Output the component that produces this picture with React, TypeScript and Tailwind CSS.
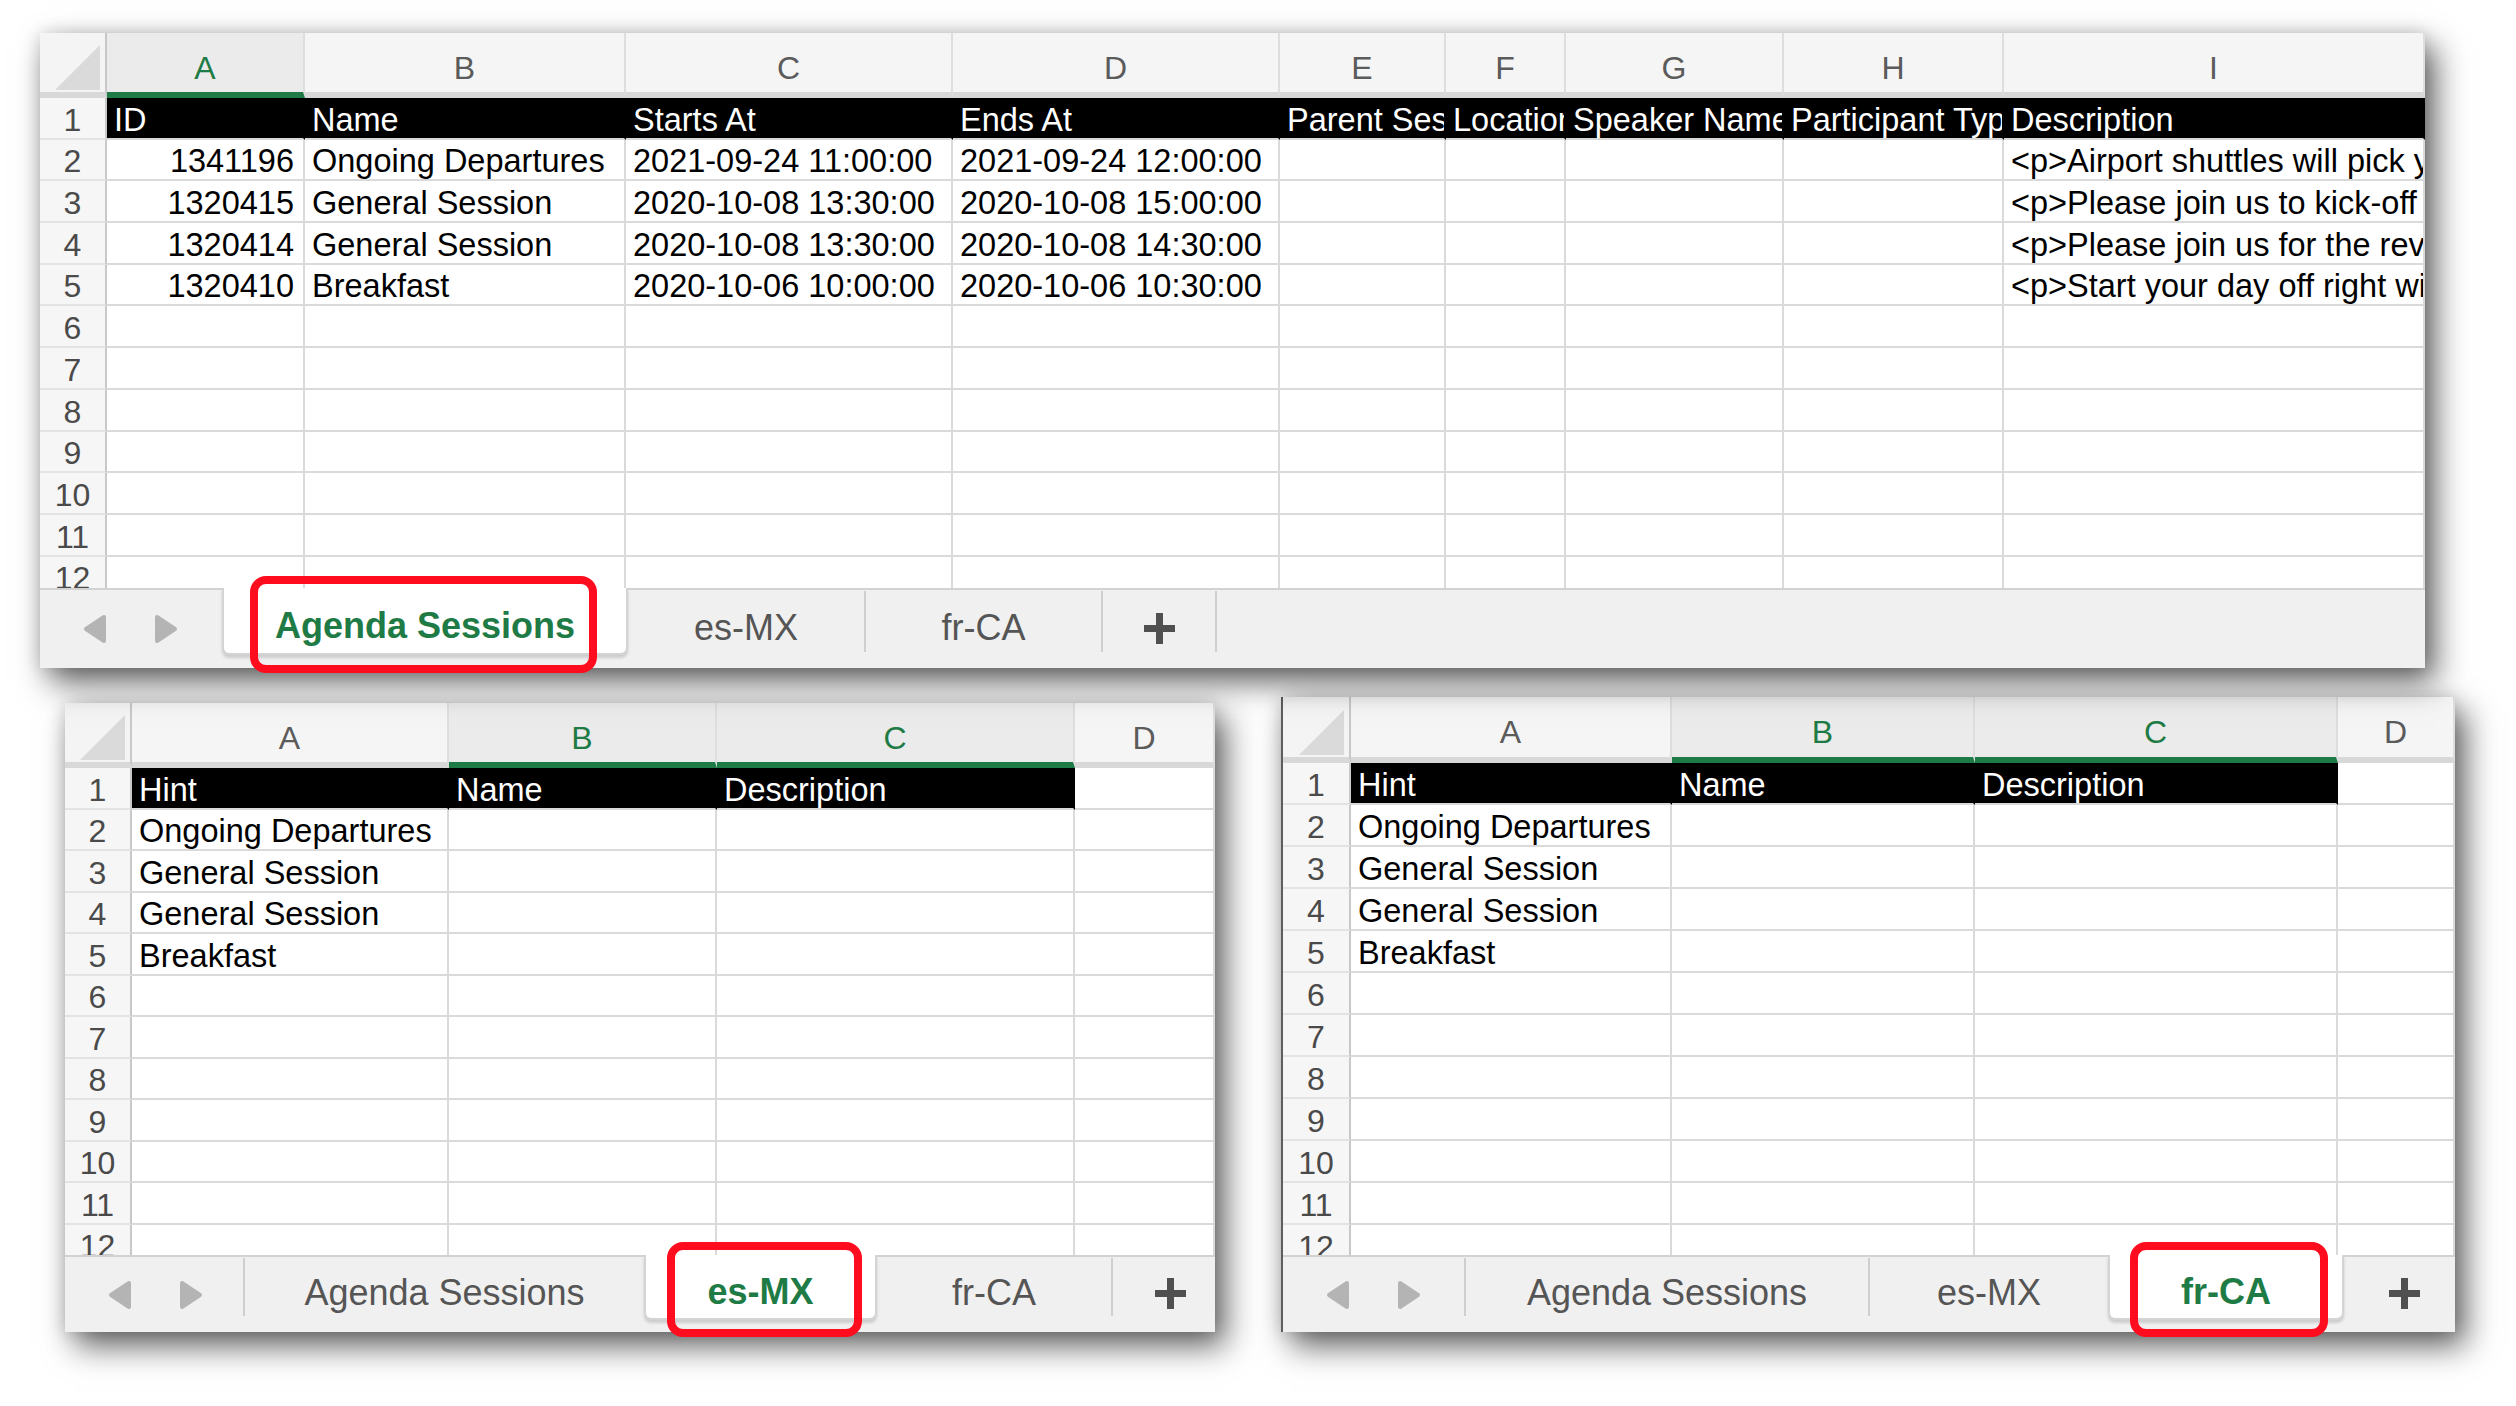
import React from "react";

type Col = { l: string; sel?: boolean };

function Corner() {
  return (
    <div className="relative bg-[#f4f4f4] border-r-2 border-b-[6px] border-r-[#c8c8c8] border-b-[#d8d8d8]">
      <svg className="absolute right-[5px] bottom-[2px]" width="45" height="45" viewBox="0 0 45 45">
        <polygon points="45,0 45,45 0,45" fill="#dadada" />
      </svg>
    </div>
  );
}

function ColHeader({ c }: { c: Col }) {
  return (
    <div
      className={`flex items-center justify-center pt-[10px] border-r-2 border-b-[6px] border-r-[#dedede] text-[32px] leading-[36px] ${
        c.sel ? "bg-[#ebebeb] border-b-[#1e7b45] text-[#1e7b45]" : "bg-[#f5f5f5] border-b-[#d8d8d8] text-[#5b5b5b]"
      }`}
    >
      {c.l}
    </div>
  );
}

type GridProps = {
  gridCols: string;
  headerH: string;
  rowH: string;
  areaH: string;
  cols: Col[];
  head: string[];
  blackN: number;
  data: string[][];
  rightCols: number[];
};

function Grid({ gridCols, headerH, rowH, areaH, cols, head, blackN, data, rightCols }: GridProps) {
  const rows = Array.from({ length: 12 }, (_, i) => i + 1);
  return (
    <div className={`${areaH} overflow-hidden bg-white shrink-0`}>
      <div className={`grid ${gridCols} ${headerH}`}>
        <Corner />
        {cols.map((c) => (
          <ColHeader key={c.l} c={c} />
        ))}
      </div>
      {rows.map((r) => (
        <div key={r} className={`grid ${gridCols} ${rowH}`}>
          <div className="flex items-end justify-center bg-[#f6f6f6] border-r-2 border-b-2 border-r-[#c8c8c8] border-b-[#e3e3e3] text-[32px] leading-[36px] text-[#4a4a4a]">
            {r}
          </div>
          {cols.map((c, ci) => {
            if (r === 1) {
              const black = ci < blackN;
              return (
                <div
                  key={c.l}
                  className={`flex items-end overflow-hidden whitespace-nowrap pl-[7px] border-b-2 border-b-[#d9d9d9] border-r-2 text-[32.5px] leading-[36px] ${
                    black ? "bg-black text-white border-r-black" : "bg-white border-r-[#dadada]"
                  }`}
                >
                  {head[ci] ?? ""}
                </div>
              );
            }
            const v = data[r - 2]?.[ci] ?? "";
            const right = rightCols.includes(ci);
            return (
              <div
                key={c.l}
                className={`flex items-end overflow-hidden whitespace-nowrap bg-white border-b-2 border-r-2 border-[#dadada] text-[32.5px] leading-[36px] text-black ${
                  right ? "justify-end pr-[9px]" : "pl-[7px]"
                }`}
              >
                {v}
              </div>
            );
          })}
        </div>
      ))}
    </div>
  );
}

function Arrows({ w, h }: { w: string; h: string }) {
  return (
    <div className={`${w} ${h} flex items-center shrink-0`}>
      <svg className="ml-[43px]" width="24" height="30" viewBox="0 0 24 30">
        <path d="M21 3 L3 15 L21 27 Z" fill="#b4b4b4" stroke="#b4b4b4" strokeWidth="4" strokeLinejoin="round" />
      </svg>
      <svg className="ml-[47px]" width="24" height="30" viewBox="0 0 24 30">
        <path d="M3 3 L21 15 L3 27 Z" fill="#b4b4b4" stroke="#b4b4b4" strokeWidth="4" strokeLinejoin="round" />
      </svg>
    </div>
  );
}

function Tab({ w, h, children }: { w: string; h: string; children: React.ReactNode }) {
  return (
    <div className={`${w} ${h} shrink-0 flex items-center justify-center whitespace-nowrap text-[36px] leading-[40px] text-[#555555]`}>
      {children}
    </div>
  );
}

function Sep({ h }: { h: string }) {
  return <div className={`self-start mt-[1px] w-[2px] ${h} bg-[#cfcfcf] shrink-0`} />;
}

function Plus() {
  return (
    <svg width="31" height="31" viewBox="0 0 31 31">
      <rect x="0" y="12" width="31" height="7" fill="#505050" />
      <rect x="12" y="0" width="7" height="31" fill="#505050" />
    </svg>
  );
}

const SHADOW = "shadow-[10px_14px_30px_rgba(0,0,0,0.62),0_0_16px_rgba(0,0,0,0.14)]";

export default function App() {
  const topCols: Col[] = [
    { l: "A", sel: true },
    { l: "B" },
    { l: "C" },
    { l: "D" },
    { l: "E" },
    { l: "F" },
    { l: "G" },
    { l: "H" },
    { l: "I" },
  ];
  const topHead = [
    "ID",
    "Name",
    "Starts At",
    "Ends At",
    "Parent Session",
    "Location",
    "Speaker Names",
    "Participant Types",
    "Description",
  ];
  const topData = [
    ["1341196", "Ongoing Departures", "2021-09-24 11:00:00", "2021-09-24 12:00:00", "", "", "", "", "<p>Airport shuttles will pick you up at the hotel</p>"],
    ["1320415", "General Session", "2020-10-08 13:30:00", "2020-10-08 15:00:00", "", "", "", "", "<p>Please join us to kick-off the event</p>"],
    ["1320414", "General Session", "2020-10-08 13:30:00", "2020-10-08 14:30:00", "", "", "", "", "<p>Please join us for the review</p>"],
    ["1320410", "Breakfast", "2020-10-06 10:00:00", "2020-10-06 10:30:00", "", "", "", "", "<p>Start your day off right with breakfast</p>"],
  ];
  const subCols: Col[] = [{ l: "A" }, { l: "B", sel: true }, { l: "C", sel: true }, { l: "D" }];
  const subHead = ["Hint", "Name", "Description", ""];
  const subData = [["Ongoing Departures"], ["General Session"], ["General Session"], ["Breakfast"]];

  return (
    <div className="w-[2516px] h-[1406px] bg-white overflow-hidden pt-[33px] font-['Liberation_Sans',Arial,sans-serif]">
      {/* Top sheet */}
      <div className={`relative z-10 ml-[40px] w-[2385px] h-[635px] flex flex-col bg-white ${SHADOW}`}>
        <Grid
          gridCols="grid-cols-[67px_198px_321px_327px_327px_166px_120px_218px_220px_421px]"
          headerH="h-[65px]"
          rowH="h-[41.7px]"
          areaH="h-[555px]"
          cols={topCols}
          head={topHead}
          blackN={9}
          data={topData}
          rightCols={[0]}
        />
        <div className="relative flex items-start h-[80px] shrink-0 bg-[#f0f0f0] border-t-2 border-[#d2d2d2]">
          <Arrows w="w-[182px]" h="h-[78px]" />
          <div className="relative -mt-[2px] w-[406px] h-[67px] shrink-0 bg-white rounded-b-[7px] border-x-2 border-b-2 border-[#d4d4d4] shadow-[0_3px_3px_rgba(0,0,0,0.15)] flex items-center justify-center pt-[11px] text-[36px] leading-[40px] font-bold text-[#1e7b45] whitespace-nowrap">
            Agenda Sessions
            <div className="absolute left-[26px] -top-[12px] w-[347px] h-[97px] border-[8px] border-[#ff0c1e] rounded-[16px]" />
          </div>
          <Tab w="w-[236px]" h="h-[76px]">es-MX</Tab>
          <Sep h="h-[61px]" />
          <Tab w="w-[235px]" h="h-[76px]">fr-CA</Tab>
          <Sep h="h-[61px]" />
          <div className="w-[112px] h-[76px] shrink-0 flex items-center justify-center">
            <Plus />
          </div>
          <Sep h="h-[61px]" />
        </div>
      </div>

      <div className="flex items-start">
        {/* es-MX sheet */}
        <div className={`ml-[65px] mt-[35px] w-[1150px] h-[629px] flex flex-col bg-white ${SHADOW}`}>
          <Grid
            gridCols="grid-cols-[67px_317px_268px_358px_140px]"
            headerH="h-[65px]"
            rowH="h-[41.5px]"
            areaH="h-[552px]"
            cols={subCols}
            head={subHead}
            blackN={3}
            data={subData}
            rightCols={[]}
          />
          <div className="relative flex items-start h-[77px] shrink-0 bg-[#f0f0f0] border-t-2 border-[#d2d2d2]">
            <Arrows w="w-[178px]" h="h-[75px]" />
            <Sep h="h-[58px]" />
            <Tab w="w-[399px]" h="h-[72px]">Agenda Sessions</Tab>
            <div className="relative -mt-[2px] w-[233px] h-[65px] shrink-0 bg-white rounded-b-[7px] border-x-2 border-b-2 border-[#d4d4d4] shadow-[0_3px_3px_rgba(0,0,0,0.15)] flex items-center justify-center pt-[11px] text-[36px] leading-[40px] font-bold text-[#1e7b45] whitespace-nowrap">
              es-MX
              <div className="absolute left-[21px] -top-[13px] w-[195px] h-[95px] border-[8px] border-[#ff0c1e] rounded-[16px]" />
            </div>
            <Tab w="w-[234px]" h="h-[72px]">fr-CA</Tab>
            <Sep h="h-[58px]" />
            <div className="w-[102px] h-[72px] shrink-0 flex items-center pl-[42px]">
              <Plus />
            </div>
          </div>
        </div>

        {/* fr-CA sheet */}
        <div className={`ml-[66px] mt-[29px] w-[1174px] h-[635px] flex flex-col bg-white border-l-2 border-[#5e5e5e] ${SHADOW}`}>
          <Grid
            gridCols="grid-cols-[68px_321px_303px_363px_117px]"
            headerH="h-[66px]"
            rowH="h-[42px]"
            areaH="h-[558px]"
            cols={subCols}
            head={subHead}
            blackN={3}
            data={subData}
            rightCols={[]}
          />
          <div className="relative flex items-start h-[77px] shrink-0 bg-[#f0f0f0] border-t-2 border-[#d2d2d2]">
            <Arrows w="w-[181px]" h="h-[75px]" />
            <Sep h="h-[58px]" />
            <Tab w="w-[402px]" h="h-[72px]">Agenda Sessions</Tab>
            <Sep h="h-[58px]" />
            <Tab w="w-[238px]" h="h-[72px]">es-MX</Tab>
            <div className="relative -mt-[2px] w-[236px] h-[65px] shrink-0 bg-white rounded-b-[7px] border-x-2 border-b-2 border-[#d4d4d4] shadow-[0_3px_3px_rgba(0,0,0,0.15)] flex items-center justify-center pt-[11px] text-[36px] leading-[40px] font-bold text-[#1e7b45] whitespace-nowrap">
              fr-CA
              <div className="absolute left-[20px] -top-[13px] w-[198px] h-[95px] border-[8px] border-[#ff0c1e] rounded-[16px]" />
            </div>
            <div className="w-[111px] h-[72px] shrink-0 flex items-center pl-[45px]">
              <Plus />
            </div>
          </div>
        </div>
      </div>
    </div>
  );
}
